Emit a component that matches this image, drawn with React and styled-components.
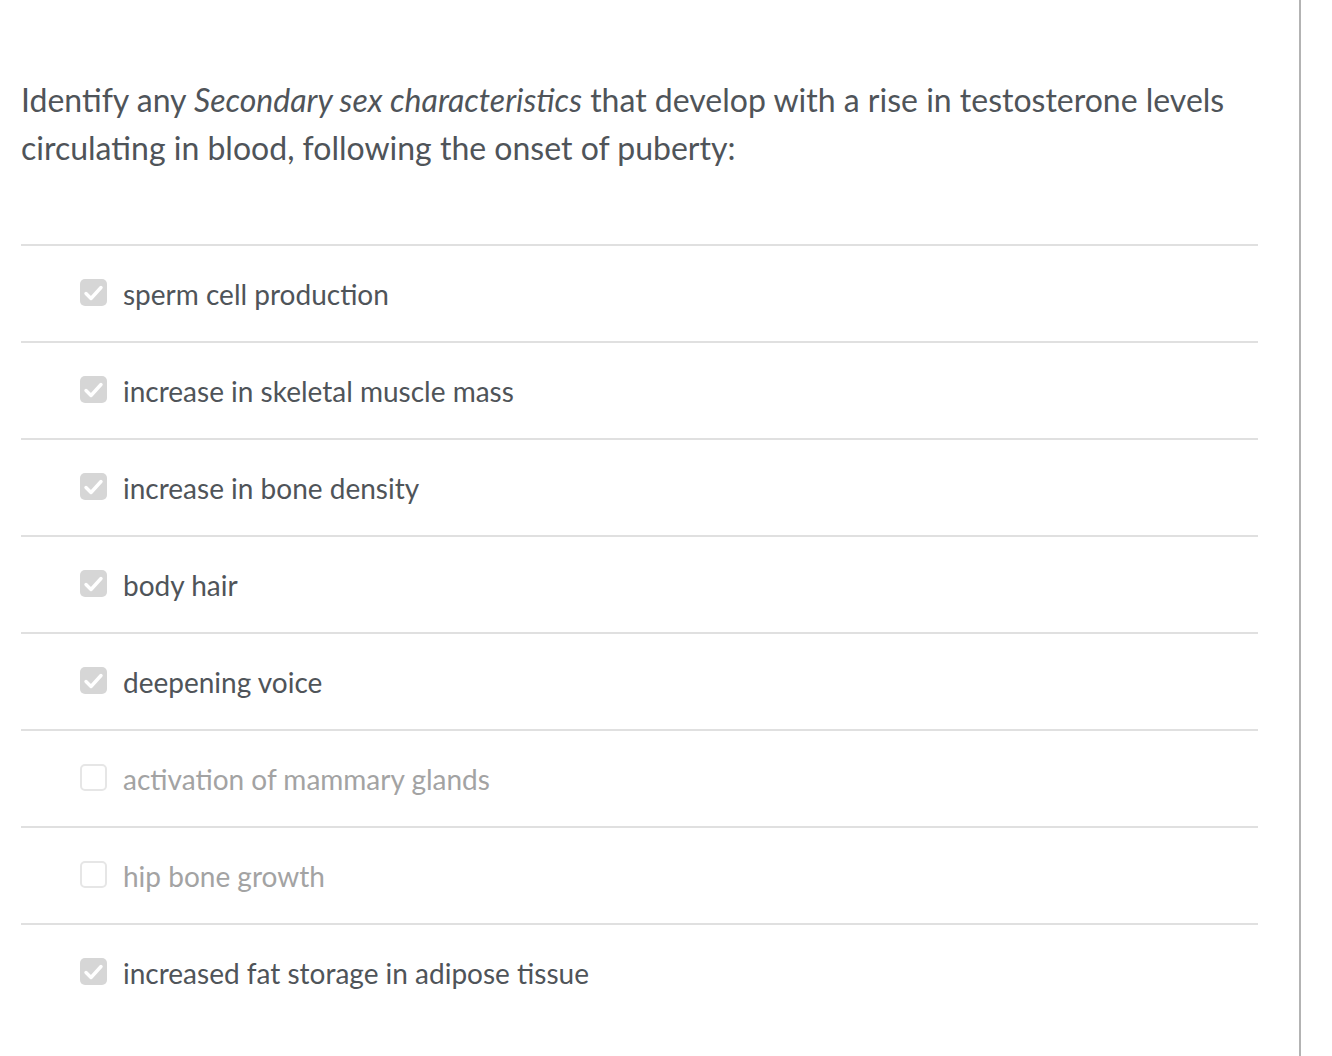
import React from "react";
import styled, { createGlobalStyle } from "styled-components";

const GlobalStyle = createGlobalStyle`
  html, body {
    margin: 0;
    padding: 0;
    background: #ffffff;
  }
  body {
    font-family: Lato, "Noto Sans", sans-serif;
  }
`;

const options = [
  { label: "sperm cell production", checked: true },
  { label: "increase in skeletal muscle mass", checked: true },
  { label: "increase in bone density", checked: true },
  { label: "body hair", checked: true },
  { label: "deepening voice", checked: true },
  { label: "activation of mammary glands", checked: false },
  { label: "hip bone growth", checked: false },
  { label: "increased fat storage in adipose tissue", checked: true },
];

const App = () => {
  return (
    <>
      <GlobalStyle />
      <Page>
        <Main>
          <Question>
            Identify any <em>Secondary sex characteristics</em> that develop with a rise in
            testosterone levels circulating in blood, following the onset of puberty:
          </Question>
          <OptionList>
            {options.map((opt) => (
              <Option key={opt.label}>
                <Box checked={opt.checked}>
                  {opt.checked && (
                    <svg width="27" height="27" viewBox="0 0 27 27">
                      <path
                        d="M6 14.5 L11 19.5 L21 8.5"
                        fill="none"
                        stroke="#ffffff"
                        strokeWidth="3.4"
                        strokeLinecap="round"
                        strokeLinejoin="round"
                      />
                    </svg>
                  )}
                </Box>
                <Label checked={opt.checked}>{opt.label}</Label>
              </Option>
            ))}
          </OptionList>
        </Main>
        <Divider />
      </Page>
    </>
  );
};

const Page = styled.div`
  display: flex;
  min-height: 1056px;
`;

const Main = styled.div`
  width: 1299px;
  padding: 76px 41px 0 21px;
  box-sizing: border-box;
`;

const Divider = styled.div`
  width: 2px;
  background: #b3b3b3;
`;

const Question = styled.p`
  margin: 0 0 72px;
  font-size: 32px;
  line-height: 48px;
  color: #4f5459;
  em {
    font-style: italic;
  }
`;

const OptionList = styled.div`
  display: flex;
  flex-direction: column;
`;

const Option = styled.div`
  display: flex;
  align-items: center;
  gap: 16px;
  height: 97px;
  box-sizing: border-box;
  border-top: 2px solid #e0e0e0;
  padding-left: 59px;
`;

const Box = styled.span`
  width: 27px;
  height: 27px;
  box-sizing: border-box;
  border-radius: 5px;
  margin-bottom: 2px;
  background: ${(p) => (p.checked ? "#d6d6d6" : "#ffffff")};
  border: ${(p) => (p.checked ? "none" : "2px solid #e6e6e6")};
  svg {
    display: block;
  }
`;

const Label = styled.span`
  font-size: 28px;
  color: ${(p) => (p.checked ? "#4f5459" : "#a3a3a3")};
`;

export default App;
